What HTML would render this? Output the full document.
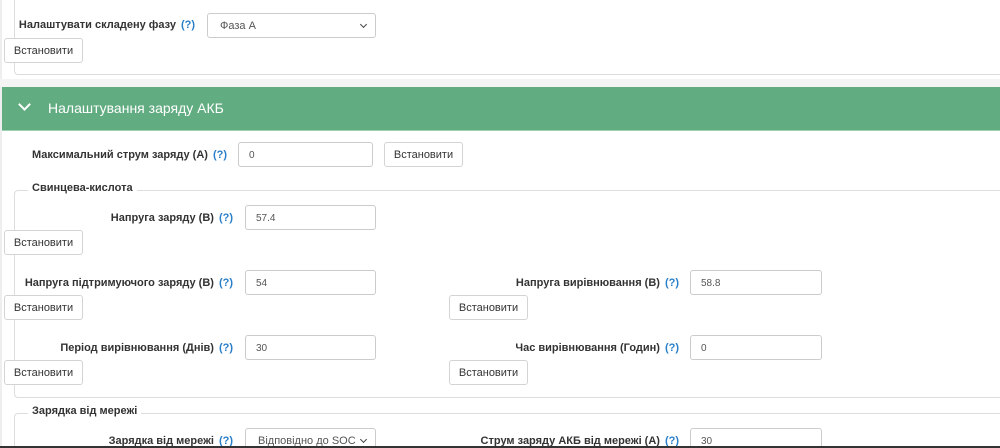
<!DOCTYPE html>
<html><head><meta charset="utf-8"><style>
*{box-sizing:border-box;margin:0;padding:0}
html,body{width:1000px;height:448px;overflow:hidden}
body{background:#fff;font-family:"Liberation Sans","DejaVu Sans",sans-serif;position:relative;color:#333}
.a{position:absolute}
.lbl{position:absolute;font-size:11px;font-weight:bold;color:#333;white-space:nowrap;text-align:right}
.q{color:#2a7fc9;font-weight:bold;margin-left:5px}
.inp{position:absolute;height:25px;border:1px solid #ccc;border-radius:3px;background:#fff;font-size:10px;color:#555;padding:7px 10px;white-space:nowrap;overflow:hidden}
.btn{position:absolute;height:25px;width:79px;border:1px solid #d4d4d4;border-radius:3px;background:#fff;font-size:11px;color:#333;text-align:center;line-height:24px}
.fs{position:absolute;border:1px solid #ddd;border-radius:4px;border-right:none}
.lg{position:absolute;background:#fff;font-size:11px;font-weight:bold;padding:0 4px}
.sel{font-size:11px;color:#555}
.sel:after{content:"";position:absolute;right:9px;top:8px;width:4px;height:4px;border-right:1.5px solid #444;border-bottom:1.5px solid #444;transform:rotate(45deg)}
</style></head><body>
<div class="a" style="left:0;top:0;width:2px;height:448px;background:#eee"></div>
<div class="fs" style="left:14px;top:-10px;width:990px;height:85px"></div>
<div class="lbl" style="right:805px;top:19px">Налаштувати складену фазу<span class="q">(?)</span></div>
<div class="inp sel" style="left:207px;top:13px;width:169px;padding:6px 12px">Фаза A</div>
<div class="btn" style="left:4px;top:38px">Встановити</div>
<div class="a" style="left:0;top:79px;width:1000px;height:8px;background:#f4f4f4"></div>
<div class="a" style="left:2px;top:87px;width:998px;height:44px;background:#62ac82;border-bottom:1px solid #9fd0b0"></div>
<div class="a" style="left:20px;top:100px;width:9px;height:9px;border-right:2px solid #fff;border-bottom:2px solid #fff;transform:rotate(45deg)"></div>
<div class="a" style="left:48px;top:100px;font-size:14px;color:#fff">Налаштування заряду АКБ</div>
<div class="lbl" style="right:773px;top:149px">Максимальний струм заряду (А)<span class="q">(?)</span></div>
<div class="inp" style="left:238px;top:142px;width:135px">0</div>
<div class="btn" style="left:384px;top:142px">Встановити</div>

<div class="fs" style="left:14px;top:190px;width:990px;height:208px"></div>
<div class="lg" style="left:28px;top:182px">Свинцева-кислота</div>
<div class="lbl" style="right:767px;top:212px">Напруга заряду (В)<span class="q">(?)</span></div>
<div class="inp" style="left:245px;top:205px;width:131px">57.4</div>
<div class="btn" style="left:4px;top:230px">Встановити</div>
<div class="lbl" style="right:767px;top:277px">Напруга підтримуючого заряду (В)<span class="q">(?)</span></div>
<div class="inp" style="left:245px;top:270px;width:131px">54</div>
<div class="btn" style="left:4px;top:295px">Встановити</div>
<div class="lbl" style="right:321px;top:277px">Напруга вирівнювання (В)<span class="q">(?)</span></div>
<div class="inp" style="left:690px;top:270px;width:132px">58.8</div>
<div class="btn" style="left:449px;top:295px">Встановити</div>
<div class="lbl" style="right:767px;top:342px">Період вирівнювання (Днів)<span class="q">(?)</span></div>
<div class="inp" style="left:245px;top:335px;width:131px">30</div>
<div class="btn" style="left:4px;top:360px">Встановити</div>
<div class="lbl" style="right:321px;top:342px">Час вирівнювання (Годин)<span class="q">(?)</span></div>
<div class="inp" style="left:690px;top:335px;width:132px">0</div>
<div class="btn" style="left:449px;top:360px">Встановити</div>

<div class="fs" style="left:14px;top:413px;width:990px;height:34px;border-bottom:none;border-radius:4px 0 0 0"></div>
<div class="lg" style="left:28px;top:405px">Зарядка від мережі</div>
<div class="lbl" style="right:767px;top:435px">Зарядка від мережі<span class="q">(?)</span></div>
<div class="inp sel" style="left:245px;top:428px;width:131px;padding:6px 12px">Відповідно до SOC</div>
<div class="lbl" style="right:321px;top:435px">Струм заряду АКБ від мережі (А)<span class="q">(?)</span></div>
<div class="inp" style="left:690px;top:428px;width:132px">30</div>
<div class="a" style="left:0;top:446px;width:1000px;height:2px;background:#333"></div>
</body></html>
